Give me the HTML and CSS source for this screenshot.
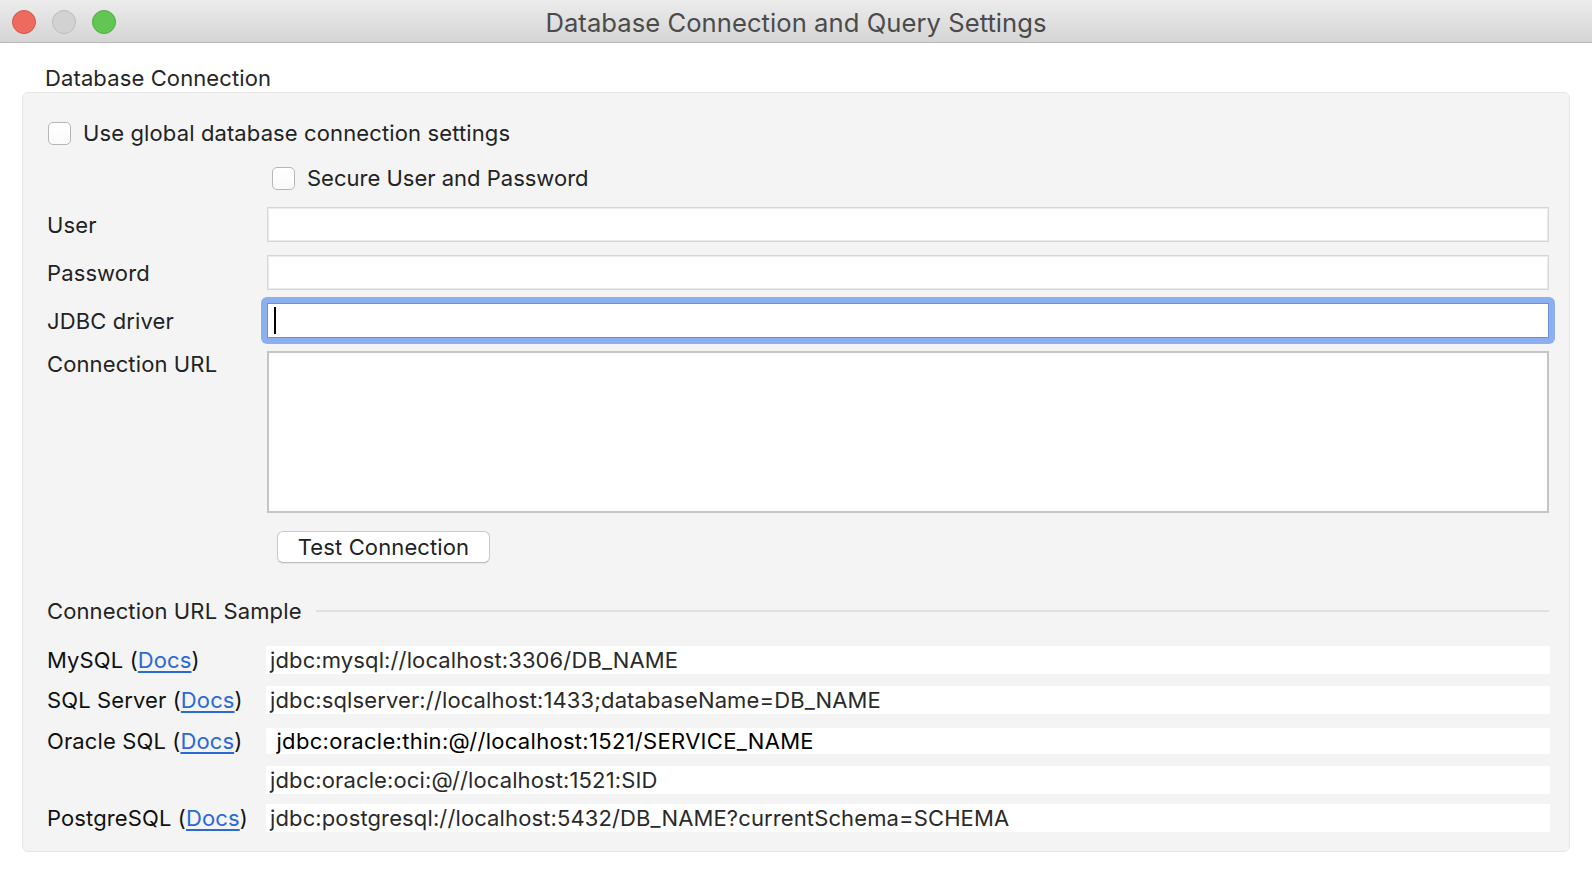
FILE: index.html
```html
<!DOCTYPE html>
<html lang="en">
<head>
<meta charset="utf-8">
<title>Database Connection and Query Settings</title>
<link rel="stylesheet" href="styles.css">
</head>
<body>
<div class="window">
  <header class="titlebar">
    <div class="lights">
      <span class="light red"></span>
      <span class="light gray"></span>
      <span class="light green"></span>
    </div>
    <div class="title">Database Connection and Query Settings</div>
    <div></div>
  </header>
  <main class="content">
    <div class="group-title">Database Connection</div>
    <section class="panel">
      <label class="check-row global"><span class="checkbox"></span><span>Use global database connection settings</span></label>
      <div class="form">
        <label class="check-row secure"><span class="checkbox"></span><span>Secure User and Password</span></label>
        <div class="label">User</div>
        <div class="field"></div>
        <div class="label">Password</div>
        <div class="field"></div>
        <div class="label">JDBC driver</div>
        <div class="focus-ring"><div class="field focused"><span class="caret"></span></div></div>
        <div class="label top">Connection URL</div>
        <div class="textarea"></div>
        <button class="btn" type="button">Test Connection</button>
      </div>
      <div class="sample-head"><span>Connection URL Sample</span><span class="rule"></span></div>
      <div class="samples">
        <div class="s-label">MySQL (<a href="#">Docs</a>)</div>
        <div class="val">jdbc:mysql://localhost:3306/DB_NAME</div>
        <div class="s-label">SQL Server (<a href="#">Docs</a>)</div>
        <div class="val">jdbc:sqlserver://localhost:1433;databaseName=DB_NAME</div>
        <div class="s-label short">Oracle SQL (<a href="#">Docs</a>)</div>
        <div class="val short dark"> jdbc:oracle:thin:@//localhost:1521/SERVICE_NAME</div>
        <div class="s-label"></div>
        <div class="val">jdbc:oracle:oci:@//localhost:1521:SID</div>
        <div class="s-label last">PostgreSQL (<a href="#">Docs</a>)</div>
        <div class="val last">jdbc:postgresql://localhost:5432/DB_NAME?currentSchema=SCHEMA</div>
      </div>
    </section>
  </main>
</div>
</body>
</html>
```

FILE: styles.css
```css
* { box-sizing: border-box; }
html, body { margin: 0; padding: 0; }
body {
  width: 1592px;
  height: 872px;
  overflow: hidden;
  background: #ffffff;
  font-family: Inter, "Noto Sans", "Liberation Sans", sans-serif;
  font-size: 22px;
  letter-spacing: 0.12px;
  color: #232323;
}
.titlebar {
  height: 43px;
  padding-top: 3px;
  border-bottom: 1px solid #bababa;
  background: linear-gradient(#ececec, #d5d5d5);
  display: grid;
  grid-template-columns: 1fr auto 1fr;
  align-items: center;
}
.lights { display: flex; gap: 16px; padding-left: 12px; margin-top: -1px; }
.light { width: 24px; height: 24px; border-radius: 50%; }
.red { background: #ee6a5f; border: 1px solid #d4554a; }
.gray { background: #d2d2d2; border: 1px solid #bdbdbd; }
.green { background: #62c554; border: 1px solid #4eab41; }
.title { color: #4b4b4b; font-size: 25.6px; letter-spacing: 0.05px; line-height: 30px; }

.content { padding: 22px 22px 0; }
.group-title { padding-left: 23px; height: 26px; line-height: 26px; margin-bottom: 1px; color: #262626; }
.panel {
  background: #f4f4f4;
  border: 1px solid #e7e7e7;
  border-radius: 6px;
  padding: 28px 20px 19px 24px;
}
.check-row { display: flex; align-items: center; gap: 12px; height: 24px; line-height: 24px; }
.checkbox {
  flex: none;
  width: 23px;
  height: 23px;
  border: 1px solid #b6b6b6;
  border-radius: 5px;
  background: linear-gradient(#ffffff, #fafafa);
}
.check-row.global { margin-left: 1px; }

.form {
  display: grid;
  grid-template-columns: 220px 1fr;
  row-gap: 13px;
  align-items: center;
  margin-top: 21px;
}
.check-row.secure { grid-column: 2; margin-left: 5px; margin-bottom: 4px; letter-spacing: 0; }
.label { line-height: 26px; }
.label.top { align-self: start; }
.field {
  height: 35px;
  background: #fff;
  border: 1px solid #d5d5d5;
  box-shadow: inset 0 0 0 1px #ececec;
}
.focus-ring {
  margin: -6px;
  padding: 6px;
  background: #8bafef;
  border-radius: 6px;
}
.field.focused {
  border-color: #6b91d9;
  box-shadow: none;
  display: flex;
  align-items: center;
  padding-left: 6px;
}
.caret { width: 2px; height: 27px; background: #000; }
.textarea { height: 162px; background: #fff; border: 2px solid #c5c5c5; }
.btn {
  grid-column: 2;
  justify-self: start;
  margin: 5px 0 0 10px;
  width: 213px;
  height: 32px;
  padding: 0;
  background: #fff;
  border: 1px solid #c9c9c9;
  border-bottom-color: #bdbdbd;
  border-radius: 6px;
  box-shadow: 0 1px 1px rgba(0,0,0,0.06);
  font: inherit;
  letter-spacing: inherit;
  color: #222;
  line-height: 30px;
}

.sample-head { display: flex; align-items: center; margin-top: 35px; height: 26px; line-height: 26px; }
.sample-head .rule { flex: 1; height: 2px; background: #e0e0e0; margin-left: 14px; }
.samples {
  display: grid;
  grid-template-columns: 219px 1fr;
  row-gap: 12px;
  margin-top: 22px;
  margin-right: -1px;
}
.s-label { height: 28px; line-height: 28px; color: #111; }
.s-label a { color: #2a69d6; text-decoration: underline; text-underline-offset: 3px; }
.val {
  height: 28px;
  line-height: 28px;
  padding-left: 4px;
  background: #fff;
  color: #2a2a2a;
  white-space: pre;
}
.val.dark { color: #000; letter-spacing: 0.3px; }
.short { height: 26px; line-height: 26px; margin-top: 2px; }
.last { margin-top: -2px; }
```
